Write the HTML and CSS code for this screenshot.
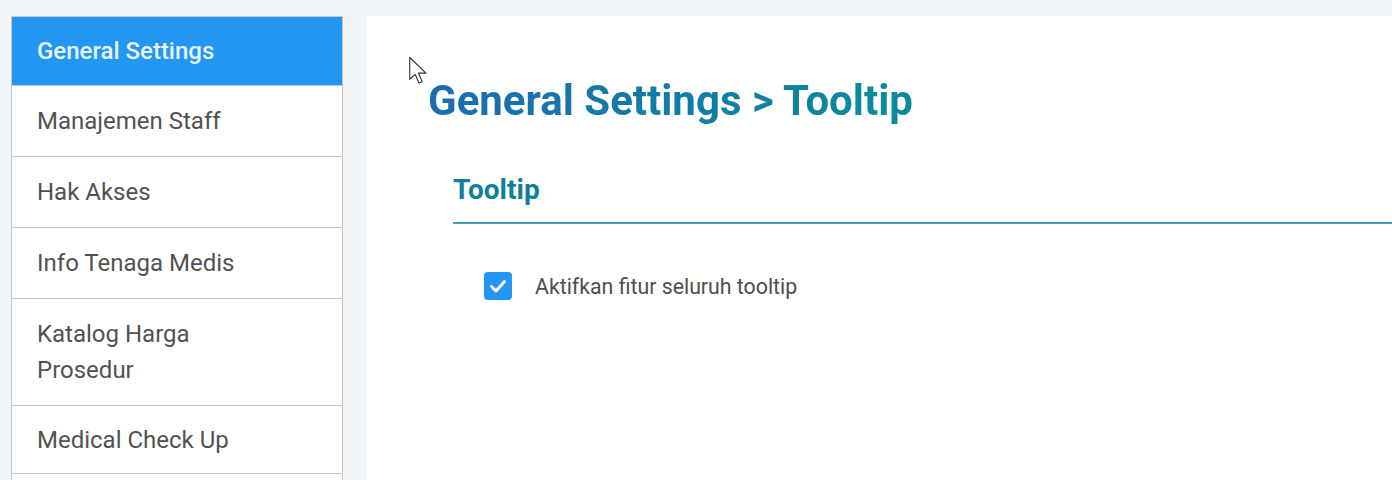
FILE: index.html
```html
<!DOCTYPE html>
<html lang="id">
<head>
<meta charset="utf-8">
<title>General Settings - Tooltip</title>
<link rel="stylesheet" href="styles.css">
</head>
<body>
<div class="layout">
  <nav class="sidebar">
    <a class="nav-item active">General Settings</a>
    <a class="nav-item">Manajemen Staff</a>
    <a class="nav-item">Hak Akses</a>
    <a class="nav-item">Info Tenaga Medis</a>
    <a class="nav-item">Katalog Harga<br>Prosedur</a>
    <a class="nav-item short">Medical Check Up</a>
    <a class="nav-item">&nbsp;</a>
  </nav>
  <main class="card">
    <h1 class="title">General Settings &gt; Tooltip</h1>
    <section class="section">
      <h2 class="section-title">Tooltip</h2>
      <label class="check-row">
        <span class="checkbox">
          <svg viewBox="0 0 28 28" width="28" height="28"><path d="M7.5 14.5 L12 19 L20.5 9.5" fill="none" stroke="#fff" stroke-width="3" stroke-linecap="round" stroke-linejoin="round"/></svg>
        </span>
        <span class="check-label">Aktifkan fitur seluruh tooltip</span>
      </label>
    </section>
    <svg class="cursor" viewBox="0 0 13 20" width="20" height="30"><path d="M1 1 L1 15.5 L4.6 12.2 L7.1 18 L9.3 17.1 L6.8 11.4 L11.8 11.4 Z" fill="#fff" stroke="#333" stroke-width="0.75" stroke-linejoin="round"/></svg>
  </main>
</div>
</body>
</html>
```

FILE: styles.css
```css
html, body {
  margin: 0;
  padding: 0;
  height: 100%;
  overflow: hidden;
}
body {
  background: #f3f6f8;
  font-family: Roboto, "Liberation Sans", sans-serif;
}
.layout {
  display: flex;
  gap: 24px;
  padding: 16px 0 0 11px;
  height: 100%;
  box-sizing: border-box;
}
.sidebar {
  width: 332px;
  flex: none;
  display: flex;
  flex-direction: column;
  background: #fff;
  border: 1px solid #c6c6c6;
  border-bottom: none;
  box-sizing: border-box;
  align-self: flex-start;
}
.nav-item {
  display: block;
  padding: 17px 25px;
  font-size: 24px;
  line-height: 36px;
  color: #525252;
  border-bottom: 1px solid #c6c6c6;
}
.nav-item.active {
  background: #2196f3;
  color: #e8f5ff;
  font-weight: 500;
  padding-top: 16px;
  padding-bottom: 16px;
}
.nav-item.short {
  padding-top: 16px;
  padding-bottom: 15px;
}
.card {
  position: relative;
  flex: 1;
  background: #fff;
  padding: 0 0 0 61px;
}
.title {
  margin: 61px 0 0 0;
  font-size: 42px;
  line-height: 48px;
  font-weight: 700;
  background: linear-gradient(90deg, #1b6cb2 0%, #117ca6 50%, #0b8b98 100%);
  -webkit-background-clip: text;
  background-clip: text;
  color: transparent;
  display: inline-block;
}
.section {
  margin: 49px 0 0 25px;
}
.section-title {
  margin: 0;
  font-size: 28px;
  line-height: 32px;
  font-weight: 700;
  color: #10809a;
  padding-bottom: 16px;
  border-bottom: 2px solid #3fa2b4;
}
.check-row {
  display: flex;
  align-items: center;
  gap: 23px;
  margin: 48px 0 0 31px;
}
.checkbox {
  width: 28px;
  height: 28px;
  border-radius: 4px;
  background: #2196f3;
  display: flex;
}
.check-label {
  font-size: 21.3px;
  color: #4e4e4e;
}
.cursor {
  position: absolute;
  left: 41px;
  top: 40px;
}
```
